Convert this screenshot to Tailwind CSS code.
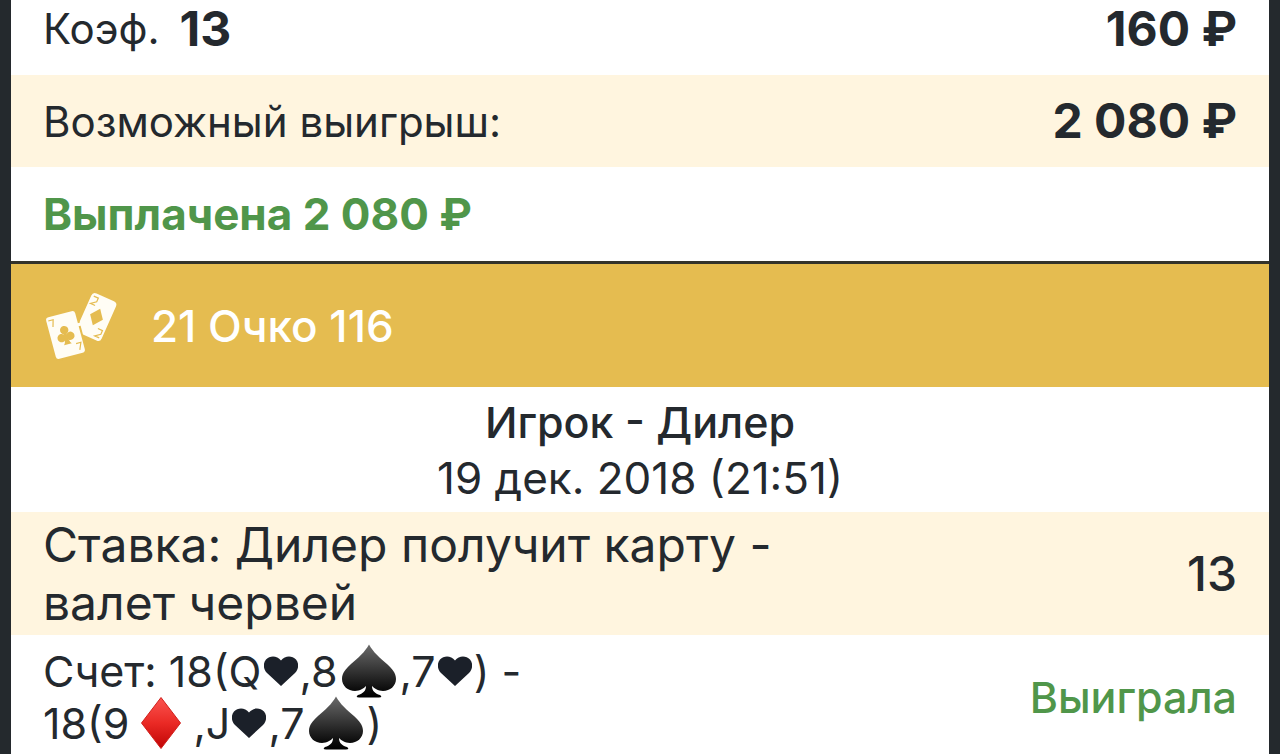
<!DOCTYPE html>
<html lang="ru">
<head>
<meta charset="utf-8">
<meta name="viewport" content="width=device-width, initial-scale=1">
<title>21 Очко 116</title>
<script src="https://cdn.jsdelivr.net/npm/@tailwindcss/browser@4"></script>
</head>
<body class="min-h-screen overflow-x-hidden bg-[#24292d] font-['Inter',sans-serif] text-[#24292e]">
<svg class="absolute h-0 w-0" aria-hidden="true">
  <defs>
    <linearGradient id="black" x1="0" y1="0" x2="0" y2="1"><stop offset="0" stop-color="#6a6a6a"/><stop offset=".5" stop-color="#333"/><stop offset=".85" stop-color="#0c0c0c"/><stop offset="1" stop-color="#000"/></linearGradient>
    <linearGradient id="red" x1="0" y1="0" x2="0" y2="1"><stop offset="0" stop-color="#fb5450"/><stop offset=".5" stop-color="#ea2a25"/><stop offset="1" stop-color="#c00404"/></linearGradient>
    <symbol id="spade" viewBox="0 0 54 54"><path fill="url(#black)" d="M27 .5C31 8 38 14 45 20C50 24.500 54 29 54 35C54 42 48 47 41 47C36 47 32 44 30 42C30 47 33 49.500 38 51Q41 53.500 37 53.500H17Q13 53.500 16 51C21 49.500 24 47 24 42C22 44 18 47 13 47C6 47 0 42 0 35C0 29 4 24.500 9 20C16 14 23 8 27 .5Z"/></symbol>
    <symbol id="diamond" viewBox="0 0 40 52"><path fill="url(#red)" stroke="#d0201c" stroke-width="1" stroke-linejoin="round" d="M20 .5L39.500 26L20 51.500L.5 26Z"/></symbol>
    <symbol id="heart" viewBox="0 0 34 30"><path fill="#1b2029" d="M17 30L3 17C-1 13-1 7 2 3.500C6-.5 13-.5 17 4.500C21-.5 28-.5 32 3.500C35 7 35 13 31 17Z"/></symbol>
  </defs>
</svg>
<main class="mx-[11px] flex min-h-screen flex-col bg-white">
  <section>
    <div class="flex h-[75px] items-start justify-between px-8">
      <p class="flex items-center gap-5 text-[42px] leading-[58px]">Коэф. <strong class="text-5xl leading-[58px] font-bold">13</strong></p>
      <strong class="text-5xl leading-[58px] font-bold">160 ₽</strong>
    </div>
    <div class="flex h-[92px] items-center justify-between bg-[#fff5df] px-8">
      <span class="text-[42px]">Возможный выигрыш:</span>
      <strong class="text-5xl font-bold">2 080 ₽</strong>
    </div>
    <p class="flex h-[94px] items-center px-8 text-[44px] font-bold text-[#50964a]">Выплачена 2 080 ₽</p>
  </section>
  <section>
    <header class="flex h-[126px] items-center gap-9 border-t-3 border-[#33332b] bg-[#e5bc50] px-8 text-white">
      <svg class="h-[68px] w-[72px] shrink-0 overflow-visible" viewBox="0 0 72 68" aria-hidden="true">
        <g transform="translate(53.500 25) rotate(24)">
          <rect x="-13.500" y="-21.500" width="27" height="43" rx="4" fill="#fffdf5"/>
          <path d="M0-9L7 0L0 9L-7 0Z" fill="#e5bc50"/>
          <path d="M-11-18H-6V-14L-11-10H-6M6 10H11V14L6 18H11" fill="none" stroke="#e5bc50" stroke-width="1.200"/>
        </g>
        <g transform="translate(22.500 43) rotate(-15)">
          <rect x="-16" y="-22.500" width="32" height="45" rx="4" fill="#fffdf5" stroke="#e5bc50" stroke-width="2"/>
          <g fill="#e5bc50"><circle cy="-5" r="4.200"/><circle cx="-4.500" cy="2" r="4.200"/><circle cx="4.500" cy="2" r="4.200"/><path d="M-1.500-4H1.500Q1 7 4 9.500H-4Q-1 7-1.500-4Z"/></g>
          <path d="M-13-18H-8L-10-11M8 11H13L10 18" fill="none" stroke="#e5bc50" stroke-width="1.200"/>
        </g>
        <path d="M34 33L42 31" stroke="#fffdf5" stroke-width="3"/>
      </svg>
      <h1 class="text-[44px] font-medium">21 Очко 116</h1>
    </header>
    <div class="flex h-[125px] flex-col justify-center text-center leading-[56px]">
      <h2 class="text-[43px] font-medium">Игрок - Дилер</h2>
      <time class="text-[44px]" datetime="2018-12-19T21:51">19 дек. 2018 (21:51)</time>
    </div>
    <div class="flex h-[123px] items-center justify-between bg-[#fff5df] px-8 text-5xl">
      <p class="leading-[58px]">Ставка: Дилер получит карту -<br>валет червей</p>
      <span class="font-medium">13</span>
    </div>
    <div class="flex items-center justify-between px-8 pt-2.5 text-[43px]">
      <div class="leading-[52px]">
        <p class="flex h-[52px] items-center whitespace-pre">Счет: 18(Q<svg class="mx-0.5 h-[30px] w-[34px]" role="img" aria-label="черви"><use href="#heart"/></svg>,8<svg class="mx-1 h-[54px] w-[54px]" role="img" aria-label="пики"><use href="#spade"/></svg>,7<svg class="mx-0.5 h-[30px] w-[34px]" role="img" aria-label="черви"><use href="#heart"/></svg>) -</p>
        <p class="flex h-[52px] items-center whitespace-pre">18(9<svg class="mx-3 h-[52px] w-[40px]" role="img" aria-label="бубны"><use href="#diamond"/></svg>,J<svg class="mx-0.5 h-[30px] w-[34px]" role="img" aria-label="черви"><use href="#heart"/></svg>,7<svg class="mx-1 h-[54px] w-[54px]" role="img" aria-label="пики"><use href="#spade"/></svg>)</p>
      </div>
      <span class="font-medium text-[#50964a]">Выиграла</span>
    </div>
  </section>
</main>
</body>
</html>
